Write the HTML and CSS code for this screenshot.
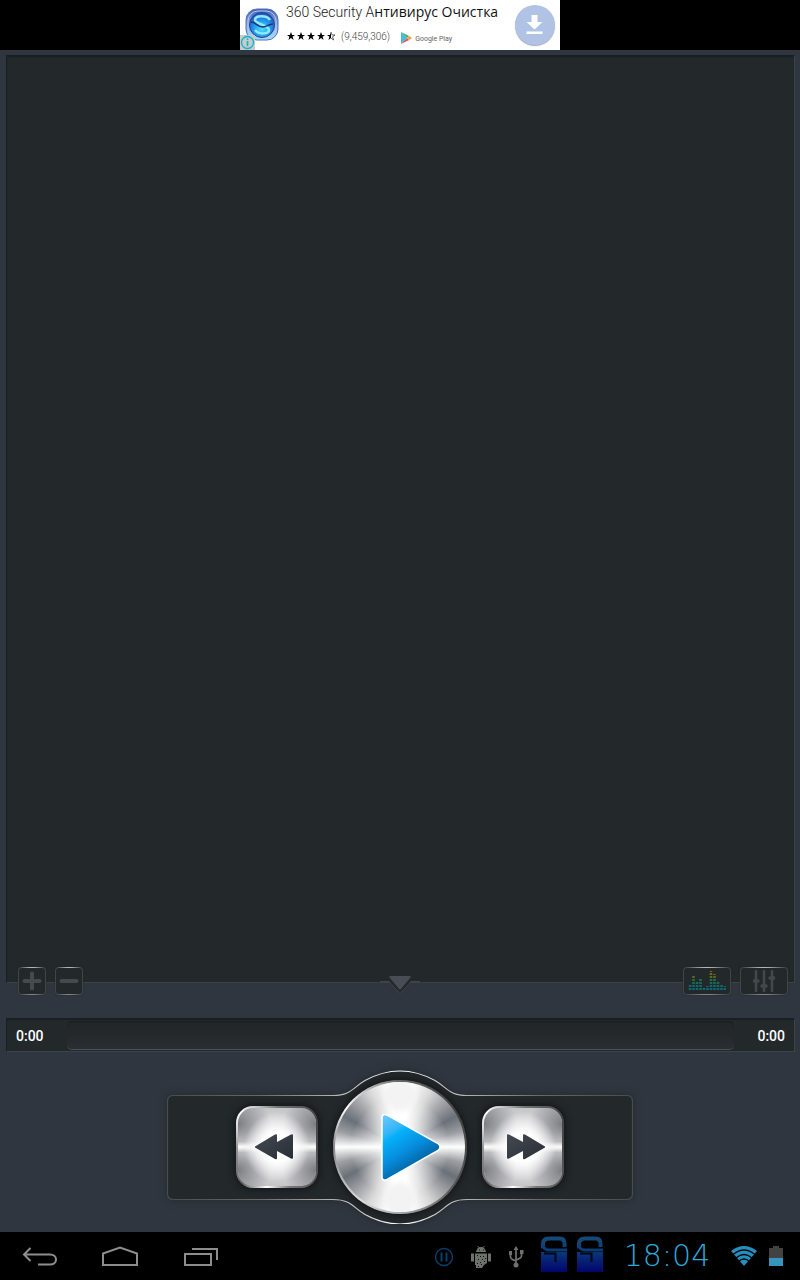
FILE: index.html
```html
<!DOCTYPE html>
<html lang="ru">
<head>
<meta charset="utf-8">
<meta name="viewport" content="width=device-width, initial-scale=1">
<title>Music Player</title>
<link rel="stylesheet" href="styles.css">
</head>
<body>
<header class="ad-bar">
  <div class="ad">
    <div class="ad-logo">
      <svg width="40" height="50" viewBox="0 0 40 50" aria-hidden="true">
        <defs>
          <linearGradient id="lg" x1="0" y1="0" x2="0" y2="1"><stop offset="0" stop-color="#3d62b8"/><stop offset=".5" stop-color="#8aa6e0"/><stop offset="1" stop-color="#9aeaff"/></linearGradient>
          <radialGradient id="lc" cx=".5" cy=".65" r=".6"><stop offset="0" stop-color="#48e4ff"/><stop offset=".65" stop-color="#208ae8"/><stop offset="1" stop-color="#2458b8"/></radialGradient>
        </defs>
        <rect x="6" y="9" width="32" height="31" rx="11" fill="url(#lg)" stroke="#5272b6"/>
        <rect x="8" y="11" width="28" height="27" rx="10" fill="none" stroke="#b8c8ee"/>
        <circle cx="22" cy="25" r="12.500" fill="url(#lc)" stroke="#263f94"/>
        <path d="M30 20C27 15 15 15 15 20c0 4 14 5 14 10 0 4-10 5-14 0" fill="none" stroke="#8fe8ff" stroke-width="2.500"/>
        <path d="M11 22c5 0 6 5 12 5 4 0 5-3 10-3" fill="none" stroke="#18366f" stroke-width="1.500"/>
        <rect x="0" y="35" width="15" height="15" fill="#c6cbcc"/>
        <circle cx="7.500" cy="42.500" r="6" fill="none" stroke="#12b4c8" stroke-width="1.300"/>
        <path d="M7.500 41v5M7.500 38.500v1.500" stroke="#12b4c8" stroke-width="1.600"/>
      </svg>
    </div>
    <div class="ad-copy">
      <div class="ad-title">360 Security A<span class="ad-cyr">нтивирус Очистка</span></div>
      <div class="ad-meta">
        <svg width="50" height="10" viewBox="0 0 50 10" aria-label="4.5">
          <defs><path id="st" d="M5 1l1.100 3H9L6.600 5.800 7.600 9 5 7.100 2.400 9l1-3.200L1 4h2.900z"/></defs>
          <use href="#st"/><use href="#st" x="10"/><use href="#st" x="20"/><use href="#st" x="30"/>
          <path d="M45 1v6.100L42.400 9l1-3.200L41 4h2.900z"/><path d="M45 1l1.100 3H49l-2.400 1.800 1 3.200L45 7.100" fill="none" stroke="#000" stroke-width=".6"/>
        </svg>
        <span class="ad-count">(9,459,306)</span>
        <svg class="play-mark" width="12" height="14" viewBox="0 0 12 14" aria-hidden="true">
          <path d="M1 1v12l6-6z" fill="#47bcd6"/><path d="M1 1l6 6 2-2z" fill="#35b07a"/><path d="M1 13l6-6 2 2z" fill="#e4505a"/><path d="M9 4.800L7 7l2 2.200L12 7z" fill="#f2a34a"/>
        </svg>
        <span class="ad-store">Google Play</span>
      </div>
    </div>
    <button class="ad-download" aria-label="Download">
      <svg width="20" height="22" viewBox="0 0 20 22"><path d="M6.500 1h6v7h5L9.500 15.500 1.500 8h5zM1.500 17.500h16V20h-16z" fill="#fff"/></svg>
    </button>
  </div>
</header>

<main class="player">
  <section class="display"></section>

  <div class="toolbar">
    <div class="tool-group">
      <button class="tool tool-square" aria-label="Add"><svg width="20" height="20" viewBox="0 0 20 20"><path d="M10 2.500v15M2.500 10h15" stroke="#464a4f" stroke-width="4" stroke-linecap="round"/></svg></button>
      <button class="tool tool-square" aria-label="Remove"><svg width="20" height="20" viewBox="0 0 20 20"><path d="M2.500 10h15" stroke="#464a4f" stroke-width="4" stroke-linecap="round"/></svg></button>
    </div>
    <button class="drop" aria-label="Collapse">
      <svg width="40" height="22" viewBox="0 0 40 22"><path d="M0 9.500h9l9 10q2 2 4 0l9-10h9V4H0z" fill="#23282b"/><path d="M0 9.500h9l9 10q2 2 4 0l9-10h9" fill="none" stroke="#3f4447"/><path d="M9.500 4h21q.5 1-.5 2L21 17q-1 1-2 0L10 6q-1-1-.5-2z" fill="#484c54"/></svg>
    </button>
    <div class="tool-group tool-group-end">
      <button class="tool tool-wide" aria-label="Spectrum">
        <svg width="38" height="20" viewBox="0 0 38 20">
          <defs><linearGradient id="sp" gradientUnits="userSpaceOnUse" x1="0" y1="0" x2="0" y2="19"><stop offset="0" stop-color="#85600f"/><stop offset=".25" stop-color="#6f6c15"/><stop offset=".5" stop-color="#1b7043"/><stop offset=".8" stop-color="#096b72"/></linearGradient></defs>
          <g fill="none" stroke="url(#sp)" stroke-width="2.500" stroke-dasharray="2 1"><path d="M2 19V14l.01 0M5.500 19V4M9 19v-8M12.500 19V7M16 19v-3M19.500 19v-4M23 19V0M26.500 19V3M30 19V10M33.500 19v-5M37 19v-4"/></g>
        </svg>
      </button>
      <button class="tool tool-wide" aria-label="Equalizer">
        <svg width="22" height="22" viewBox="0 0 22 22"><path d="M3 1v20M11 1v20M19 1v20" stroke="#43484c" stroke-width="2.500" stroke-linecap="round"/><path d="M1 11h4M9 16h4M17 8h4" stroke="#43484c" stroke-width="3.500" stroke-linecap="round"/></svg>
      </button>
    </div>
  </div>

  <div class="seek">
    <span class="time">0:00</span>
    <input class="seek-track" type="range" min="0" max="100" value="0" aria-label="Position">
    <span class="time time-end">0:00</span>
  </div>

  <div class="controls">
    <svg class="housing" width="466" height="154" viewBox="0 0 466 154" aria-hidden="true">
      <defs><linearGradient id="hs" gradientUnits="userSpaceOnUse" x1="0" y1="0" x2="466" y2="0"><stop offset="0" stop-color="#4a4b4c"/><stop offset=".2" stop-color="#686868"/><stop offset=".42" stop-color="#d0d0d0"/><stop offset=".5" stop-color="#fff"/><stop offset=".58" stop-color="#d0d0d0"/><stop offset=".8" stop-color="#686868"/><stop offset="1" stop-color="#4a4b4c"/></linearGradient></defs>
      <path d="M6.500 25.500H166c18 0 20-8 32-15 11-6 22-9.500 35-9.500s24 3.500 35 9.500c12 7 14 15 32 15h159.500q6 0 6 6v92q0 6-6 6H300c-18 0-20 8-32 15-11 6-22 9.500-35 9.500s-24-3.500-35-9.500c-12-7-14-15-32-15H6.500q-6 0-6-6v-92q0-6 6-6z" fill="#23282b" stroke="url(#hs)" stroke-width="1.200"/>
    </svg>
    <button class="metal skip skip-back" aria-label="Previous">
      <svg width="40" height="28" viewBox="0 0 40 28"><defs><linearGradient id="ic" x1="0" y1="0" x2="1" y2="1"><stop offset="0" stop-color="#454950"/><stop offset="1" stop-color="#292e37"/></linearGradient></defs><path d="M1 13.500L21 1.500q2-1 2 1V9L37 1.500q2-1 2 1v22q0 2-2 1L23 18v7q0 2-2 1L1 14.500z" fill="url(#ic)"/></svg>
    </button>
    <button class="metal play" aria-label="Play">
      <svg width="66" height="74" viewBox="0 0 66 74"><defs><linearGradient id="pl" x1=".1" y1="0" x2=".65" y2="1"><stop offset="0" stop-color="#67c6fa"/><stop offset=".22" stop-color="#35b6f8"/><stop offset=".3" stop-color="#05b0f8"/><stop offset=".55" stop-color="#068edf"/><stop offset=".8" stop-color="#0465a4"/><stop offset="1" stop-color="#04568d"/></linearGradient></defs><path d="M4 8q0-5 5-3l51 28.500q4 3.500 0 7L9 69.500q-5 2-5-3z" fill="url(#pl)" stroke="#fff" stroke-width="1.500"/></svg>
    </button>
    <button class="metal skip skip-next" aria-label="Next">
      <svg width="40" height="28" viewBox="0 0 40 28"><path d="M39 13.500L19 1.500q-2-1-2 1V9L3 1.500q-2-1-2 1v22q0 2 2 1L17 18v7q0 2 2 1l20-11.500z" fill="url(#ic)"/></svg>
    </button>
  </div>
</main>

<footer class="system-bar">
  <nav class="nav-keys">
    <button class="key" aria-label="Back"><svg width="40" height="24" viewBox="0 0 40 24"><path d="M10.500 3L4 9.500l6.500 6.500M4 9.500h26c8 0 8 10 0 10H18" fill="none" stroke="#8d8d8d" stroke-width="2"/></svg></button>
    <button class="key" aria-label="Home"><svg width="40" height="24" viewBox="0 0 40 24"><path d="M3 20V8.500L20 2.500l17 6V20z" fill="none" stroke="#8d8d8d" stroke-width="2"/></svg></button>
    <button class="key" aria-label="Recent apps"><svg width="40" height="24" viewBox="0 0 40 24"><path d="M5 9h26v11H5zM12 4h25v11" fill="none" stroke="#8d8d8d" stroke-width="2"/></svg></button>
  </nav>
  <div class="status">
    <div class="notices">
      <svg width="20" height="20" viewBox="0 0 20 20" aria-hidden="true"><circle cx="10" cy="10" r="8.500" fill="none" stroke="#073f6c" stroke-width="1.400"/><path d="M7.500 5.500v9M12.500 5.500v9" stroke="#073f6c" stroke-width="2"/></svg>
      <svg width="20" height="24" viewBox="0 0 20 24" aria-hidden="true"><path d="M5 7q1-5 5-5t5 5zM4 8.500h12V18l-3 2-2 3H5V20H4zM0 8.500h3v8H0zM17 8.500h3v8h-3z" fill="#6d706d"/><path d="M6.500 1l2 2M13.500 1l-2 2" stroke="#6d706d"/><path d="M6 10h1v1H6zm3 1h1v1H9zm3 0h1v1h-1zm-5 3h1v1H7zm4 0h1v1h-1zm-5 4h1v1H6zm3-1h1v1H9zm4-1h1v1h-1zm-3 3h1v1h-1zm-3 2h1v1H7zm7-8h1v1h-1zM8 4.500h1v1H8zm4 0h1v1h-1z" fill="#111"/></svg>
      <svg width="16" height="24" viewBox="0 0 16 24" aria-hidden="true"><path d="M8 3v17M2.500 7v5q0 2 5.500 4M13.500 7v4q0 2-5.500 4" fill="none" stroke="#707070" stroke-width="1.700"/><path d="M8 1l2.500 4h-5zM1 6h3v4H1zM12 5h3.500v4H12z" fill="#707070"/><circle cx="8" cy="20" r="2.500" fill="#707070"/></svg>
    </div>
    <div class="locks">
      <svg width="28" height="38" viewBox="0 0 28 38" aria-hidden="true"><defs><linearGradient id="lk" gradientUnits="userSpaceOnUse" x1="0" y1="0" x2="0" y2="38"><stop offset="0" stop-color="#174d77"/><stop offset=".4" stop-color="#0b3c78"/><stop offset="1" stop-color="#02026e"/></linearGradient><g id="lp"><path d="M1 17h26v20H1z" fill="url(#lk)"/><path d="M3 13.500V9q0-5.500 6-5.500h10.500q5 0 5 5V12" fill="none" stroke="url(#lk)" stroke-width="4"/><path d="M4 12.500q1 2.500 5 2.500h18" fill="none" stroke="url(#lk)" stroke-width="3"/><path d="M4 18.500h11.500V27" fill="none" stroke="#000614" stroke-width="2"/></g></defs><use href="#lp"/></svg>
      <svg width="28" height="38" viewBox="0 0 28 38" aria-hidden="true"><use href="#lp"/></svg>
    </div>
    <time class="clock">18:04</time>
    <div class="signals">
      <svg width="28" height="22" viewBox="0 0 28 22" aria-hidden="true"><path d="M1 6q13-10 26 0L14 21z" fill="#268fbf"/><path d="M3 9.500q11-9 22 0M6 13q8-7 16 0M8.500 16.500q5.500-5 11 0" fill="none" stroke="#00080c" stroke-width="1.300"/></svg>
      <svg width="14" height="22" viewBox="0 0 14 22" aria-hidden="true"><path d="M0 3h4V1h6v2h4v18H0z" fill="#424242"/><path d="M0 13h14v8H0z" fill="#3595bd"/></svg>
    </div>
  </div>
</footer>
</body>
</html>
```
FILE: styles.css
```css
* { box-sizing: border-box; }

body {
  margin: 0;
  min-height: 100vh;
  display: flex;
  flex-direction: column;
  background: #30363f;
  font-family: Roboto, "Noto Sans", sans-serif;
}

button {
  padding: 0;
  border: 0;
  background: none;
  display: flex;
  align-items: center;
  justify-content: center;
}

svg { display: block; flex: none; }

.ad-bar { background: #000; display: flex; justify-content: center; }
.ad { width: 320px; height: 50px; background: #fff; display: flex; }
.ad-logo { width: 46px; }
.ad-copy { flex: 1; padding-top: 2px; white-space: nowrap; }
.ad-title { font-size: 14px; line-height: 19px; font-weight: 300; color: #222; }
.ad-cyr { font-family: "Open Sans", "Noto Sans", sans-serif; font-weight: 400; color: #111; }
.ad-meta { display: flex; align-items: center; margin-top: 6px; height: 16px; }
.ad-count { font-size: 10px; font-weight: 300; color: #444; margin-left: 5px; }
.play-mark { margin: 4px 3px 0 10px; }
.ad-store { font-size: 7px; color: #666; margin-top: 5px; }
.ad-download {
  width: 40px;
  height: 40px;
  margin: 5px 5px 0 0;
  border-radius: 50%;
  background: #b0c3e5;
  box-shadow: 0 1px 1px #a4adba;
}

.player {
  flex: 1;
  display: flex;
  flex-direction: column;
  padding: 5px 5px 8px 6px;
}

.display {
  flex: 1;
  background: #23282b;
  border: 1px solid #3c4246;
  border-top-color: #1b1f22;
  border-left-color: #1b1f22;
  box-shadow: inset 0 1px 1px #1b1f22;
}

.toolbar {
  display: grid;
  grid-template-columns: 1fr 40px 1fr;
  height: 28px;
  margin: -16px 7px 23px 12px;
  position: relative;
}
.tool-group { display: flex; gap: 9px; }
.tool-group-end { justify-content: flex-end; }
.tool {
  height: 28px;
  border: 1px solid transparent;
  border-radius: 4px;
  background:
    linear-gradient(#23282b, #23282b) padding-box,
    radial-gradient(ellipse 45% 2px at 50% 0, #ddd, transparent) border-box,
    radial-gradient(ellipse 45% 2px at 50% 100%, #999, transparent) border-box,
    linear-gradient(#414548, #414548) border-box;
  box-shadow: 0 0 2px #22272b;
}
.tool-square { width: 28px; }
.tool-wide { width: 48px; }
.drop { height: 28px; padding-top: 4px; margin-left: -3px; width: 40px; }

.seek {
  display: flex;
  align-items: center;
  height: 34px;
  background: #23282b;
  border: 1px solid #3e4347;
  border-top: 2px solid #1b1f22;
  border-left-color: #1b1f22;
}
.time {
  width: 60px;
  padding: 0 9px;
  font-size: 14px;
  line-height: 16px;
  font-weight: 500;
  color: #fff;
}
.time-end { text-align: right; }
.seek-track {
  appearance: none;
  flex: 1;
  min-width: 0;
  height: 29px;
  margin: 0;
  border-radius: 5px;
  border-bottom: 1px solid #4a515d;
  background: linear-gradient(#202528, #2a2d31);
  box-shadow: inset 0 1px 1px #1b1f22;
}
.seek-track::-webkit-slider-thumb { appearance: none; width: 1px; height: 1px; }

.controls {
  position: relative;
  align-self: center;
  width: 466px;
  height: 154px;
  margin: 18px 2px 0 0;
  display: flex;
  align-items: center;
  justify-content: center;
  gap: 15px;
}
.housing { position: absolute; inset: 0; filter: drop-shadow(0 0 4px #23292f); }

.metal { position: relative; border: 2px solid transparent; }
.skip {
  width: 82px;
  height: 82px;
  border-radius: 17px;
  background:
    radial-gradient(ellipse 62% 7% at 0 50%, #fff, transparent) padding-box,
    radial-gradient(ellipse 62% 7% at 100% 50%, #fff, transparent) padding-box,
    radial-gradient(ellipse 42% 45% at 50% 50%, #fff 40%, transparent) padding-box,
    radial-gradient(ellipse 42% 40% at 0 20%, #7c7d82, transparent) padding-box,
    radial-gradient(ellipse 42% 40% at 100% 20%, #7c7d82, transparent) padding-box,
    radial-gradient(ellipse 42% 40% at 0 80%, #7c7d82, transparent) padding-box,
    radial-gradient(ellipse 42% 40% at 100% 80%, #7c7d82, transparent) padding-box,
    linear-gradient(#c6c6c9, #d8d8da 25%, #f4f4f4 50%, #d8d8da 75%, #c6c6c9) padding-box,
    conic-gradient(#777, #444 15%, #555 35%, #777 45%, #fff 54%, #666 62%, #999 75%, #fff 87%, #777) border-box;
  box-shadow: 0 0 6px 2px #14181a;
}
.skip-back { padding-right: 6px; }
.skip-next { padding-left: 6px; }
.play {
  width: 134px;
  height: 134px;
  border-radius: 50%;
  background:
    radial-gradient(circle 20px at 50% 10%, #f3f3f3 60%, transparent) padding-box,
    radial-gradient(circle 20px at 50% 90%, #f3f3f3 60%, transparent) padding-box,
    radial-gradient(circle 50px at 50% 50%, #fff 25%, transparent) padding-box,
    conic-gradient(#fff 0 3%, #d8d8d9 8%, #a5a7aa 12%, #6a7078 17%, #9b9ea2 21%, #fff 25%, #9b9ea2 29%, #6a7078 33%, #a5a7aa 38%, #d8d8d8 42%, #fff 47% 53%, #d8d8d8 58%, #a5a7aa 62%, #6a7078 67%, #9b9ea2 71%, #fff 75%, #9b9ea2 79%, #6a7078 83%, #a5a7aa 88%, #d8d8d9 92%, #fff 97%) padding-box,
    conic-gradient(#666, #444 15%, #555 35%, #aaa 50%, #ddd 60%, #888 75%, #fff 85%, #666) border-box;
  box-shadow: 0 0 6px 2px #14181a;
}
.play svg { margin-left: 22px; }

.system-bar {
  height: 48px;
  padding-right: 17px;
  background: #000;
  display: flex;
  align-items: center;
  justify-content: space-between;
}
.nav-keys { display: flex; }
.key { width: 80px; height: 48px; padding-top: 2px; }
.status { display: flex; align-items: center; gap: 16px; }
.notices { display: flex; align-items: center; gap: 17px; padding-top: 2px; }
.locks { display: flex; gap: 8px; padding-bottom: 4px; }
.clock {
  width: 94px;
  font-family: "DejaVu Sans", sans-serif;
  font-weight: 200;
  font-size: 30px;
  line-height: 32px;
  text-align: center;
  color: #2fa9db;
}
.signals { display: flex; gap: 11px; }
```
